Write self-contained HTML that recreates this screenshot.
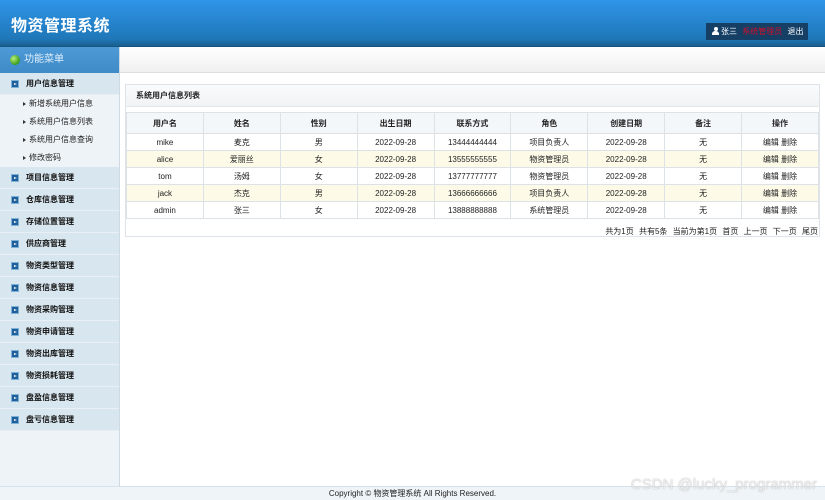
<!DOCTYPE html>
<html><head><meta charset="utf-8"><style>
*{margin:0;padding:0;box-sizing:border-box}
body{width:825px;height:500px;overflow:hidden;font-family:"Liberation Sans","Noto Sans CJK SC",sans-serif;font-size:8px;color:#222;background:#fff;position:relative}
.hd{position:absolute;left:0;top:0;width:825px;height:47px;background:linear-gradient(#2f95e8,#1f77b8 85%,#1a5f8f);border-bottom:1px solid #16557f}
.hd h1{position:absolute;left:11px;top:12px;color:#fff;font-size:16px;font-weight:bold;letter-spacing:0.5px}
.ub{position:absolute;left:706px;top:23px;width:102px;height:17px;background:#163f66;color:#fff;font-size:8px;line-height:17px;padding-left:6px;white-space:nowrap}
.ub .r{color:#d0102a;margin:0 3px}
.ub i{display:inline-block;width:7px;height:8px;vertical-align:-1px;position:relative;margin-right:2px}
.ub i:before{content:"";position:absolute;left:1.5px;top:0;width:4px;height:4px;border-radius:50%;background:#fff}
.ub i:after{content:"";position:absolute;left:0;top:4px;width:7px;height:4px;border-radius:3px 3px 0 0;background:#fff}
.sb{position:absolute;left:0;top:47px;width:120px;height:439px;background:#eef3f7;border-right:1px solid #cfd9e1}
.mh{height:26px;background:linear-gradient(#4e9ad6,#3f8bc8);color:#dfeefa;font-size:10px;line-height:26px;padding-left:24px;position:relative}
.mh i{position:absolute;left:10px;top:8px;width:10px;height:10px;border-radius:50%;background:radial-gradient(circle at 35% 35%,#b8f07a,#3a9a18 70%)}
.g{height:22px;background:#d8e6ef;border-bottom:1px solid #e9f0f5;font-weight:bold;font-size:8px;line-height:22px;padding-left:26px;position:relative;color:#111}
.g b{position:absolute;left:11px;top:7px;width:8px;height:8px;background:#1f5f9a;border:1px solid #7fb1d8}
.g b:after{content:"";position:absolute;left:2px;top:1.5px;border-left:3px solid #fff;border-top:1.5px solid transparent;border-bottom:1.5px solid transparent}
.s{height:18px;line-height:18px;padding-left:29px;position:relative;font-size:8px;color:#222}
.s:before{content:"";position:absolute;left:23px;top:7px;border-left:3px solid #333;border-top:2px solid transparent;border-bottom:2px solid transparent}
.tb{position:absolute;left:120px;top:47px;width:705px;height:26px;background:linear-gradient(#fff,#f0f0f0);border-bottom:1px solid #ddd}
.pn{position:absolute;left:125px;top:84px;width:695px;height:153px;border:1px solid #dde3e8}
.pt{height:22px;background:linear-gradient(#fafbfc,#f1f3f5);border-bottom:1px solid #e3e7ea;line-height:22px;padding-left:10px;font-weight:bold;font-size:8px}
table{position:absolute;left:0;top:27px;width:693px;border-collapse:collapse;table-layout:fixed}
td,th{border:1px solid #dde2e6;text-align:center;font-size:8px;height:17px;font-weight:normal}
th{height:21px;font-weight:bold;background:#f4f7fa}
tr.y td{background:#fdfbe8}
.pg{position:absolute;right:1px;top:141px;font-size:8px;word-spacing:3px}
.ft{position:absolute;left:0;top:486px;width:825px;height:14px;background:#eef4f8;border-top:1px solid #d8e2ea;text-align:center;font-size:8px;line-height:13px}
.wm{position:absolute;right:8px;top:476px;color:rgba(255,255,255,.75);font-size:15px;text-shadow:0 0 1px #999}
</style></head><body>
<div class="hd"><h1>物资管理系统</h1><div class="ub"><i></i>张三 <span class="r">系统管理员</span> 退出</div></div>
<div class="sb">
<div class="mh"><i></i>功能菜单</div>
<div class="g"><b></b>用户信息管理</div>
<div class="s">新增系统用户信息</div><div class="s">系统用户信息列表</div><div class="s">系统用户信息查询</div><div class="s">修改密码</div>
<div class="g"><b></b>项目信息管理</div>
<div class="g"><b></b>仓库信息管理</div>
<div class="g"><b></b>存储位置管理</div>
<div class="g"><b></b>供应商管理</div>
<div class="g"><b></b>物资类型管理</div>
<div class="g"><b></b>物资信息管理</div>
<div class="g"><b></b>物资采购管理</div>
<div class="g"><b></b>物资申请管理</div>
<div class="g"><b></b>物资出库管理</div>
<div class="g"><b></b>物资损耗管理</div>
<div class="g"><b></b>盘盈信息管理</div>
<div class="g"><b></b>盘亏信息管理</div>
</div>
<div class="tb"></div>
<div class="pn"><div class="pt">系统用户信息列表</div>
<table>
<tr><th>用户名</th><th>姓名</th><th>性别</th><th>出生日期</th><th>联系方式</th><th>角色</th><th>创建日期</th><th>备注</th><th>操作</th></tr>
<tr><td>mike</td><td>麦克</td><td>男</td><td>2022-09-28</td><td>13444444444</td><td>项目负责人</td><td>2022-09-28</td><td>无</td><td>编辑 删除</td></tr>
<tr class="y"><td>alice</td><td>爱丽丝</td><td>女</td><td>2022-09-28</td><td>13555555555</td><td>物资管理员</td><td>2022-09-28</td><td>无</td><td>编辑 删除</td></tr>
<tr><td>tom</td><td>汤姆</td><td>女</td><td>2022-09-28</td><td>13777777777</td><td>物资管理员</td><td>2022-09-28</td><td>无</td><td>编辑 删除</td></tr>
<tr class="y"><td>jack</td><td>杰克</td><td>男</td><td>2022-09-28</td><td>13666666666</td><td>项目负责人</td><td>2022-09-28</td><td>无</td><td>编辑 删除</td></tr>
<tr><td>admin</td><td>张三</td><td>女</td><td>2022-09-28</td><td>13888888888</td><td>系统管理员</td><td>2022-09-28</td><td>无</td><td>编辑 删除</td></tr>
</table>
<div class="pg">共为1页 共有5条 当前为第1页 首页 上一页 下一页 尾页</div>
</div>
<div class="ft">Copyright © 物资管理系统 All Rights Reserved.</div>
<div class="wm">CSDN @lucky_programmer</div>
</body></html>
